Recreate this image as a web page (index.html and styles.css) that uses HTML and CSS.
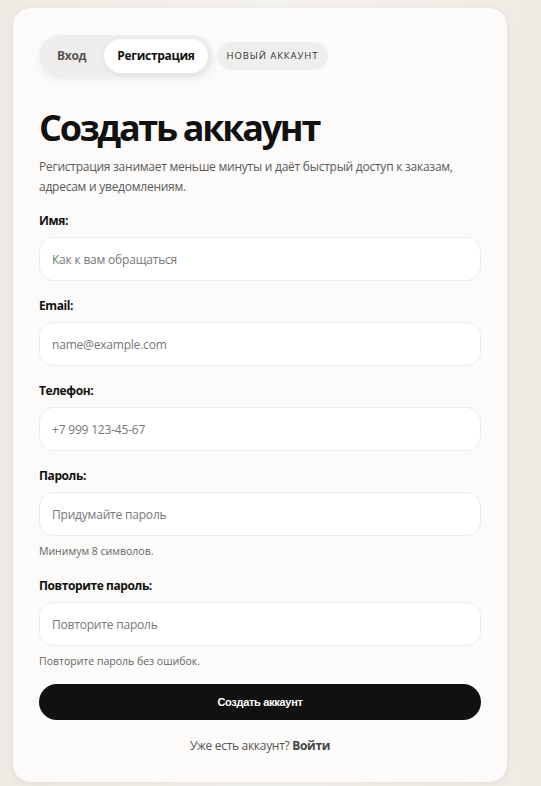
FILE: index.html
```html
<!DOCTYPE html>
<html lang="ru">
<head>
<meta charset="UTF-8" />
<meta name="viewport" content="width=device-width, initial-scale=1" />
<title>Создать аккаунт</title>
<link rel="stylesheet" href="styles.css">
</head>
<body>

<div class="card">
  <div class="top">
    <div class="tabs">
      <span class="tab">Вход</span>
      <span class="tab active">Регистрация</span>
    </div>
    <span class="badge">Новый аккаунт</span>
  </div>

  <h1>Создать аккаунт</h1>
  <p class="lead">Регистрация занимает меньше минуты и даёт быстрый доступ к заказам, адресам и уведомлениям.</p>

  <form class="form">
    <div class="field">
      <label for="name">Имя:</label>
      <input type="text" id="name" placeholder="Как к вам обращаться" />
    </div>
    <div class="field">
      <label for="email">Email:</label>
      <input type="email" id="email" placeholder="name@example.com" />
    </div>
    <div class="field">
      <label for="phone">Телефон:</label>
      <input type="tel" id="phone" placeholder="+7 999 123-45-67" />
    </div>
    <div class="field">
      <label for="pass">Пароль:</label>
      <input type="password" id="pass" placeholder="Придумайте пароль" />
      <p class="hint">Минимум 8 символов.</p>
    </div>
    <div class="field">
      <label for="pass2">Повторите пароль:</label>
      <input type="password" id="pass2" placeholder="Повторите пароль" />
      <p class="hint">Повторите пароль без ошибок.</p>
    </div>
    <button type="button">Создать аккаунт</button>
  </form>

  <p class="footer">Уже есть аккаунт? <a href="#">Войти</a></p>
</div>

</body>
</html>
```

FILE: styles.css
```css
body {
  margin: 0;
  min-height: 786px;
  background: linear-gradient(90deg, #efebe4 0%, #f5f3ef 50%, #efebe4 100%);
  font-family: "Open Sans", "Noto Sans", sans-serif;
  color: #111;
}
.card {
  width: 494px;
  box-sizing: border-box;
  margin: 8px 0 0 13px;
  padding: 27px 26px 28px;
  background-color: #fcfbf9;
  border-radius: 18px;
  box-shadow: 0 2px 10px rgba(60, 40, 20, 0.07);
}
.top {
  display: flex;
  align-items: center;
  gap: 4px;
}
.tabs {
  display: flex;
  align-items: center;
  gap: 4px;
  padding: 4px 5px 4px 4px;
  background-color: #efeeec;
  border-radius: 999px;
  box-shadow: 0 4px 10px rgba(0, 0, 0, 0.05);
}
.tab {
  padding: 8px 14px;
  font-size: 12px;
  font-weight: 700;
  line-height: 18px;
  letter-spacing: -0.3px;
  color: #555;
  border-radius: 999px;
}
.tab.active {
  padding: 8px 13px;
  background-color: #fff;
  color: #111;
  box-shadow: 0 2px 6px rgba(0, 0, 0, 0.06);
}
.badge {
  padding: 6px 10px;
  font-size: 9.5px;
  line-height: 16px;
  letter-spacing: 0.9px;
  text-transform: uppercase;
  color: #333;
  background-color: #efeeec;
  border-radius: 999px;
}
h1 {
  margin: 29px 0 0;
  font-size: 36px;
  line-height: 44px;
  font-weight: 700;
  letter-spacing: -2.3px;
  color: #111;
}
.lead {
  margin: 7px 0 0;
  font-size: 12px;
  line-height: 20px;
  letter-spacing: -0.25px;
  color: #5a5a5a;
}
.form {
  margin-top: 16px;
}
.field {
  margin-bottom: 17px;
}
label {
  display: block;
  margin-bottom: 8px;
  font-size: 12px;
  line-height: 16px;
  font-weight: 700;
  letter-spacing: -0.4px;
}
input {
  display: block;
  width: 100%;
  height: 44px;
  box-sizing: border-box;
  padding: 0 12px;
  border: 1px solid #eeecea;
  border-radius: 14px;
  background-color: #fff;
  font-family: inherit;
  font-size: 12px;
  letter-spacing: -0.2px;
  color: #111;
}
input::placeholder {
  color: #777;
}
.hint {
  margin: 8px 0 0;
  font-size: 10.5px;
  line-height: 14px;
  color: #666;
}
.field:nth-child(4) {
  margin-bottom: 20px;
}
.field:nth-child(5) {
  margin-bottom: 16px;
}
button {
  display: block;
  width: 100%;
  height: 36px;
  border: none;
  border-radius: 18px;
  background-color: #111;
  color: #fff;
  font-family: "Liberation Sans", Arial, sans-serif;
  font-size: 11px;
  font-weight: 700;
  letter-spacing: -0.3px;
  cursor: pointer;
}
.footer {
  margin: 18px 0 0;
  text-align: center;
  font-size: 12px;
  line-height: 16px;
  letter-spacing: -0.3px;
  color: #555;
}
.footer a {
  color: #444;
  font-weight: 700;
  text-decoration: none;
}
```
